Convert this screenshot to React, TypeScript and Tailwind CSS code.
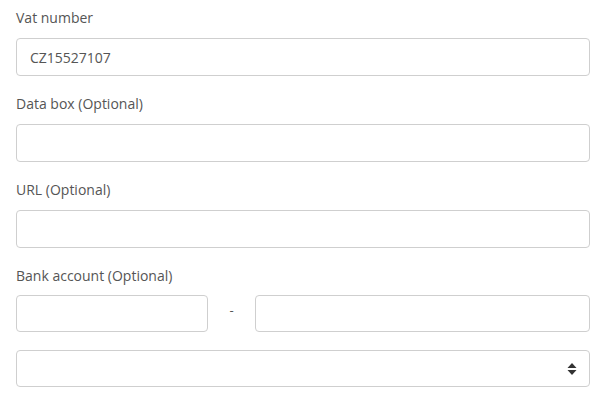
import React from "react";

const inputCls =
  "block w-full rounded-[4px] border border-[#cfcfcf] bg-white px-[13px] text-[14px] text-[#555] outline-none";

function Field({ label, value }: { label: string; value?: string }) {
  return (
    <div className="flex flex-col">
      <label className="text-[14px] leading-[20px] text-[#555]">{label}</label>
      <input className={inputCls + " h-[38px] mt-[10px]"} defaultValue={value} />
    </div>
  );
}

export default function App() {
  return (
    <div
      className="w-[608px] h-[404px] bg-white pl-[16px] pr-[18px] pt-[8px]"
      style={{ fontFamily: '"Open Sans", sans-serif' }}
    >
      <div className="flex flex-col gap-[18px]">
        <Field label="Vat number" value="CZ15527107" />
        <Field label="Data box (Optional)" />
        <Field label="URL (Optional)" />
        <div className="flex flex-col">
          <label className="text-[14px] leading-[20px] text-[#555]">Bank account (Optional)</label>
          <div className="mt-[9px] grid grid-cols-[192px_47px_1fr] items-center">
            <input className={inputCls + " h-[37px]"} />
            <div className="text-center text-[13px] text-[#555] pb-[6px]">-</div>
            <input className={inputCls + " h-[37px]"} />
          </div>
          <div className="relative mt-[18px]">
            <select className={inputCls + " h-[37px] appearance-none"}>
              <option></option>
            </select>
            <svg
              className="absolute right-[13px] top-1/2 -translate-y-1/2"
              width="10"
              height="14"
              viewBox="0 0 10 14"
            >
              <path d="M5 1 L9.5 6 H0.5 Z" fill="#333" />
              <path d="M5 13 L9.5 8 H0.5 Z" fill="#333" />
            </svg>
          </div>
        </div>
      </div>
    </div>
  );
}
